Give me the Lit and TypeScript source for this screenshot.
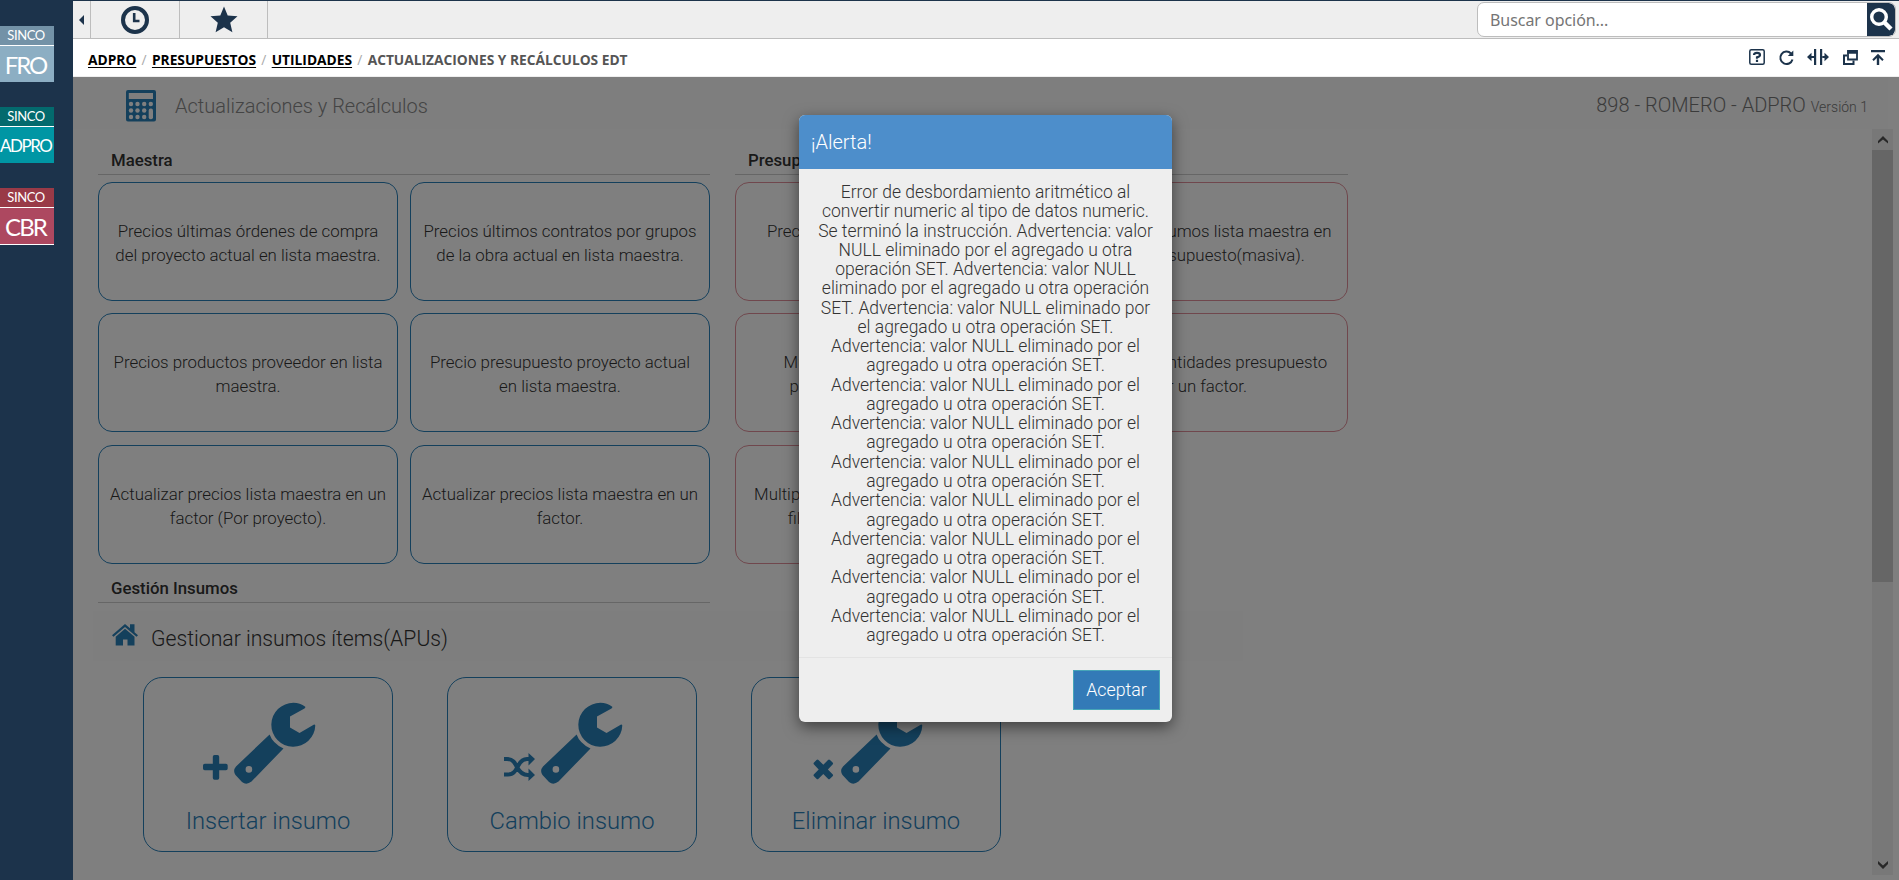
import { LitElement, html, css, svg } from "lit";
import { customElement, property } from "lit/decorators.js";

type Lines = string[];

const WARNING: Lines = ["Advertencia: valor NULL eliminado por el", "agregado u otra operación SET."];

const MESSAGE: Lines = [
  "Error de desbordamiento aritmético al",
  "convertir numeric al tipo de datos numeric.",
  "Se terminó la instrucción. Advertencia: valor",
  "NULL eliminado por el agregado u otra",
  "operación SET. Advertencia: valor NULL",
  "eliminado por el agregado u otra operación",
  "SET. Advertencia: valor NULL eliminado por",
  "el agregado u otra operación SET.",
  ...Array.from({ length: 8 }, () => WARNING).flat(),
];

const MASTER: Lines[] = [
  ["Precios últimas órdenes de compra", "del proyecto actual en lista maestra."],
  ["Precios últimos contratos por grupos", "de la obra actual en lista maestra."],
  ["Precios productos proveedor en lista", "maestra."],
  ["Precio presupuesto proyecto actual", "en lista maestra."],
  ["Actualizar precios lista maestra en un", "factor (Por proyecto)."],
  ["Actualizar precios lista maestra en un", "factor."],
];

const BUDGET: Lines[] = [
  ["Precios insumo lista maestra en", "presupuesto."],
  ["Precios de insumos lista maestra en", "para el presupuesto(masiva)."],
  ["Multiplicar precios insumos", "presupuesto por un factor"],
  ["Multiplicar cantidades presupuesto", "por un factor."],
  ["Multiplicar precios presupuestos en", "filtro por un factor general."],
];

const wrench = svg`
  <path fill-rule="evenodd" d="M35.600 32.400 Q38.500 41 49.500 46.500 L17.500 79.500 Q12.500 83.500 8 80 L1.500 73 Q-1.500 68.500 2 64.500 Z M18.200 67.400 a3.300 3.300 0 1 0 -6.600 0 a3.300 3.300 0 1 0 6.600 0 Z"/>
  <path d="M71.300 4.700 Q66 .8 59.500 .8 A22 22 0 1 0 81.300 23.500 Q80.800 21.800 78.800 23.200 L65.500 31 L56 25.500 V14.500 L70.500 6.500 Q71.800 5.500 71.300 4.700 Z"/>`;

const marks: Record<string, unknown> = {
  plus: svg`<path d="M11.500 0 h3 q1.700 0 1.700 1.700 V8.700 H23 q1.700 0 1.700 1.700 v3.200 q0 1.700 -1.700 1.700 H16.200 V23 q0 1.700 -1.700 1.700 h-3 q-1.700 0 -1.700 -1.700 V15.300 H1.700 Q0 15.300 0 13.600 v-3.200 Q0 8.700 1.700 8.700 H9.800 V1.700 Q9.800 0 11.500 0 Z"/>`,
  shuffle: svg`<path d="M0 6 H3 C9 6 11 10 13 14 S18 22 24 22 H26 M0 21.500 H4 C10 21.500 12 17 14 13 S18 6 23 6 H26" fill="none" stroke="currentColor" stroke-width="4"/><path d="M24.500 0 L31 6 L24.500 12.500 Z M24.500 15.500 L31 22 L24.500 28 Z"/>`,
  times: svg`<path d="M3.500 1 Q4.500 0 5.500 1 L10.300 5.800 L15 1 Q16 0 17 1 L19.600 3.600 Q20.600 4.600 19.600 5.600 L14.900 10.400 L19.600 15.200 Q20.600 16.200 19.600 17.200 L17 19.800 Q16 20.800 15 19.800 L10.300 15 L5.500 19.800 Q4.500 20.800 3.500 19.800 L1 17.200 Q0 16.200 1 15.200 L5.700 10.400 L1 5.600 Q0 4.600 1 3.600 Z"/>`,
};

@customElement("module-logo")
class ModuleLogo extends LitElement {
  @property() name = "";
  static styles = css`
    :host { display: block; width: 54px; height: 57px; color: #fff; font-family: Lato, sans-serif; }
    .brand { height: 19px; font-size: 13px; line-height: 18px; letter-spacing: -0.4px; text-align: center; padding-right: 2px; box-sizing: border-box; }
    .code { height: 36px; margin-top: 1px; line-height: 38px; text-align: center; font-size: 24px; white-space: nowrap; padding-right: 3px; box-sizing: border-box; }
    .frame { background: linear-gradient(#fff, #fff) 0 19px / 54px 1px no-repeat; }
    .fro .brand { background: #7392a7; } .fro .code { background: #8caec3; letter-spacing: -2px; }
    .adpro .brand { background: #036a6d; } .adpro .code { background: #0096a4; font-size: 17px; letter-spacing: -1.5px; line-height: 38px; }
    .cbr { border-bottom: 1px solid #fff; }
    .cbr .brand { background: #993a47; } .cbr .code { background: #ad4860; letter-spacing: -1.8px; }
  `;
  render() {
    return html`<div class="frame ${this.name.toLowerCase()}"><div class="brand">SINCO</div><div class="code">${this.name}</div></div>`;
  }
}

@customElement("option-card")
class OptionCard extends LitElement {
  @property({ attribute: false }) lines: Lines = [];
  static styles = css`
    :host { display: flex; flex-direction: column; align-items: center; justify-content: center; box-sizing: border-box; height: 119px; padding-top: 3px; border: 1px solid var(--edge); border-radius: 14px; font: 300 16.850px/24px Roboto, sans-serif; color: #333; white-space: nowrap; }
  `;
  render() {
    return this.lines.map((l) => html`<div>${l}</div>`);
  }
}

@customElement("tool-card")
class ToolCard extends LitElement {
  @property() mark = "plus";
  @property() label = "";
  static styles = css`
    :host { display: flex; flex-direction: column; align-items: center; box-sizing: border-box; width: 250px; height: 175px; border: 1px solid #2980b9; border-radius: 19px; color: #2980b9; font: 300 23.800px/32px Roboto, sans-serif; }
    .icons { display: flex; align-items: flex-end; height: 81px; margin-top: 25px; gap: 6px; padding-right: 17px; }
    .wrench { width: 82px; height: 82px; }
    .plus { width: 25px; height: 25px; margin: 0 0 4px 0; }
    .shuffle { width: 31px; height: 28px; margin-bottom: 3px; }
    .times { width: 21px; height: 21px; margin: 0 1px 4px 0; }
    svg { fill: currentColor; overflow: visible; display: block; }
    .label { margin-top: 21px; white-space: nowrap; }
  `;
  render() {
    return html`<div class="icons">
        <svg class=${this.mark}>${marks[this.mark]}</svg>
        <svg class="wrench" viewBox="0 0 82 82">${wrench}</svg>
      </div>
      <div class="label">${this.label}</div>`;
  }
}

@customElement("app-root")
class AppRoot extends LitElement {
  static styles = css`
    :host { display: flex; position: relative; width: 1899px; height: 880px; overflow: hidden; background: #fff; font-family: Roboto, sans-serif; }
    * { box-sizing: border-box; }
    svg { display: block; overflow: visible; }
    .side { width: 73px; flex: none; background: #1c334b; padding-top: 26px; display: flex; flex-direction: column; gap: 24px; }
    .main { flex: 1; min-width: 0; display: flex; flex-direction: column; color: #1c334b; }
    .top { height: 39px; flex: none; display: flex; background: #eee; border-top: 1px solid #1c334b; border-bottom: 1px solid #bdbdbd; }
    .cell { display: flex; align-items: center; justify-content: center; border-right: 1px solid #bdbdbd; }
    .c1 { width: 18px; } .c2 { width: 89px; } .c3 { width: 88px; }
    .search { margin: 1px 3px 1px auto; width: 419px; height: 35px; display: flex; border: 1px solid #bdbdbd; border-radius: 7px; background: #fff; overflow: hidden; }
    .query { flex: 1; padding-left: 12px; font: 16px/34px "Noto Sans", sans-serif; letter-spacing: -0.05px; color: #757575; }
    .go { width: 28px; background: #1c334b; border-radius: 0 6px 6px 0; padding: 5px 0 0 3px; }
    .crumbs { height: 38px; flex: none; display: flex; align-items: center; border-bottom: 1px solid #eee; padding: 4px 14px 0 15px; font: 700 13.750px/20px "Open Sans", sans-serif; white-space: nowrap; }
    .crumbs a { color: #000; text-decoration: underline; text-underline-offset: 2px; }
    .sep { color: #aaa; font-weight: 400; width: 15.600px; text-align: center; }
    .here { color: #555; }
    .actions { margin-left: auto; display: flex; align-items: center; gap: 13.500px; margin-top: -5px; }
    .view { position: relative; flex: 1; min-height: 0; display: flex; flex-direction: column; color: #333; }
    .title { height: 52px; flex: none; width: 1815px; display: flex; align-items: center; background: #fcfcfc; padding: 5px 20px 0 53px; font-weight: 300; font-size: 20px; color: #888; white-space: nowrap; }
    .title .name { margin-left: 19px; }
    .title .project { margin: -2px 0 0 auto; color: #777; }
    .title small { font-size: 14px; }
    .body { flex: 1; min-height: 0; display: flex; padding-right: 6px; }
    .sections { flex: 1; padding-left: 25px; }
    .pair { display: flex; gap: 25px; }
    .group { width: 612px; }
    .group.wide { width: 613px; }
    h3 { margin: 0; height: 46px; padding: 19px 0 0 13px; font: 500 16.800px/24px Roboto, sans-serif; color: #333; border-bottom: 1px solid #ccc; }
    .grid { margin-top: 7px; display: grid; grid-template-columns: 300px 300px; justify-content: space-between; row-gap: 12.250px; }
    .blue { --edge: #2980b9; } .pink { --edge: #e08f9a; }
    .insumos h3 { height: 39px; padding-top: 12px; }
    .insumos { width: 612px; }
    .banner { margin: 8px 0 0 -5px; width: 1150px; height: 50px; background: #fcfcfc; display: flex; align-items: center; padding: 5px 0 0 18px; font-weight: 300; font-size: 21.200px; }
    .banner svg { margin: -7px 13px 0 1px; }
    .tools { margin: 16px 0 0 45px; display: flex; gap: 54px; }
    .scroll { width: 21px; height: 746px; background: #f1f1f1; display: flex; flex-direction: column; justify-content: space-between; }
    .scroll .arrow { height: 21px; display: flex; align-items: center; justify-content: center; }
    .thumb { height: 432px; background: #cdcdcd; margin-bottom: auto; }
    .veil { position: absolute; inset: 0; background: rgba(0, 0, 0, 0.5); }
    .modal { position: absolute; left: 799px; top: 115px; width: 373px; height: 607px; display: flex; flex-direction: column; background: #eee; border-radius: 6px; overflow: hidden; box-shadow: 0 5px 15px rgba(0, 0, 0, 0.5); }
    .head { height: 54px; background: #4d8ecb; color: #fff; font: 300 20px/55px Roboto, sans-serif; padding-left: 12px; }
    .text { flex: 1; padding-top: 14px; text-align: center; white-space: nowrap; font: 300 17.500px/19.270px Roboto, sans-serif; color: #333; }
    .foot { height: 65px; border-top: 1px solid #e3e3e3; padding: 12px 12px 0 0; display: flex; justify-content: flex-end; }
    button { width: 87px; height: 40px; padding: 0; border: 1px solid #46a5b8; background: #337ab7; color: #fff; font: 300 17.800px/38px Roboto, sans-serif; }
  `;

  render() {
    return html`
      <nav class="side">
        <module-logo name="FRO"></module-logo>
        <module-logo name="ADPRO"></module-logo>
        <module-logo name="CBR"></module-logo>
      </nav>
      <div class="main">
        <header class="top">
          <div class="cell c1"><svg width="5" height="10"><path d="M5 0 V10 L0 5 Z" fill="#1c334b" /></svg></div>
          <div class="cell c2">
            <svg width="28" height="28" fill="none" stroke="#1c334b"><circle cx="14" cy="14" r="12" stroke-width="4" /><path d="M13.200 7 V15 H18.500" stroke-width="2.600" /></svg>
          </div>
          <div class="cell c3"><svg width="28" height="27" viewBox="0 0 28 27"><path d="M14 .5 L17.700 9.500 L27.500 10.300 L20.200 16.700 L22.400 26.200 L14 21.200 L5.600 26.200 L7.800 16.700 L.5 10.300 L10.300 9.500 Z" fill="#1c334b" /></svg></div>
          <div class="search">
            <div class="query">Buscar opción...</div>
            <div class="go"><svg width="22" height="23" fill="none" stroke="#fff"><circle cx="9" cy="9" r="7.300" stroke-width="3.400" /><path d="M14 14 L21 21" stroke-width="4.500" /></svg></div>
          </div>
        </header>
        <div class="crumbs">
          <a>ADPRO</a><span class="sep">/</span><a>PRESUPUESTOS</a><span class="sep">/</span><a>UTILIDADES</a><span class="sep">/</span><span class="here">ACTUALIZACIONES Y RECÁLCULOS EDT</span>
          <div class="actions">
            <svg width="16" height="16" fill="none" stroke="#1c334b"><rect x=".8" y=".8" width="14.400" height="14.400" rx="1.500" stroke-width="1.500" /><path d="M5 6 Q5 3.800 8 3.800 T11 6 Q11 7.400 8 8.400 V9.700 M8 10.800 V12.900" stroke-width="2.200" /></svg>
            <svg width="15" height="15" fill="none" stroke="#1c334b" stroke-width="2"><path d="M12 3.500 A6.200 6.200 0 1 0 13.500 9.500" /><path d="M14.300 .5 V6 H8.800 Z" fill="#1c334b" stroke="none" /></svg>
            <svg width="22" height="16" fill="#1c334b"><path d="M7 0 h2.200 V16 H7 Z M13 0 h2.200 V16 H13 Z M0 8 L4.500 3.800 V7 H8 V9 H4.500 V12.200 Z M22 8 L17.500 3.800 V7 H15 V9 H17.500 V12.200 Z" /></svg>
            <svg width="15" height="15" fill="none" stroke="#1c334b"><path d="M4 5.500 H1 V14 H10.500 V10.500" stroke-width="2" /><path d="M5 1 H14 V9.500 H5 Z" stroke-width="1.800" /><path d="M4.500 2 H14.500" stroke-width="3.500" /></svg>
            <svg width="14" height="15" fill="#1c334b"><path d="M0 0 H14 V2.300 H0 Z M7 3.800 L12.700 9.500 L11.300 10.900 L8.200 8 V15 H5.800 V8 L2.700 10.900 L1.300 9.500 Z" /></svg>
          </div>
        </div>
        <div class="view">
          <div class="title">
            <svg width="30" height="32" viewBox="0 0 30 32"><path fill="#2980b9" fill-rule="evenodd" d="M2 0 H28 Q30 0 30 2 V29.500 Q30 31.500 28 31.500 H2 Q0 31.500 0 29.500 V2 Q0 0 2 0 Z M2.800 3 V9 H27 V3 Z" />
              <g fill="#fff">${[14, 20.500, 27].map((y) => [5, 11.500, 18.200].map((x) => svg`<circle cx=${x} cy=${y} r="2.200"/>`))}<circle cx="24.800" cy="14" r="2.200" /><rect x="22.700" y="18.500" width="4.300" height="10.700" rx="2" /></g>
            </svg>
            <span class="name">Actualizaciones y Recálculos</span>
            <span class="project">898 - ROMERO - ADPRO <small>Versión 1</small></span>
          </div>
          <div class="body">
            <div class="sections">
              <div class="pair">
                <div class="group blue"><h3>Maestra</h3><div class="grid">${MASTER.map((l) => html`<option-card .lines=${l}></option-card>`)}</div></div>
                <div class="group wide pink"><h3>Presupuesto</h3><div class="grid">${BUDGET.map((l) => html`<option-card .lines=${l}></option-card>`)}</div></div>
              </div>
              <div class="insumos"><h3>Gestión Insumos</h3></div>
              <div class="banner">
                <svg width="26" height="22" viewBox="0 0 26 22" fill="#2980b9"><path d="M13 0 L18 4.300 V.3 H22.500 V8.200 L26 11.300 L24.500 12.800 L13 3 L1.500 12.800 L0 11.300 Z M13 4.800 L22.500 12.700 V21.500 H15.500 V15.500 H11 V21.500 H3.700 V12.700 Z" /></svg>
                Gestionar insumos ítems(APUs)
              </div>
              <div class="tools">
                <tool-card mark="plus" label="Insertar insumo"></tool-card>
                <tool-card mark="shuffle" label="Cambio insumo"></tool-card>
                <tool-card mark="times" label="Eliminar insumo"></tool-card>
              </div>
            </div>
            <div class="scroll">
              <div class="arrow"><svg width="10" height="8"><path d="M0 7.500 V5 L5 0 L10 5 V7.500 L5 3.500 Z" fill="#505050" /></svg></div>
              <div class="thumb"></div>
              <div class="arrow"><svg width="10" height="8"><path d="M0 0 V3 L5 8 L10 3 V0 L5 4.500 Z" fill="#505050" /></svg></div>
            </div>
          </div>
          <div class="veil"></div>
        </div>
      </div>
      <div class="modal" role="dialog">
        <div class="head">¡Alerta!</div>
        <div class="text">${MESSAGE.map((l) => html`<div>${l}</div>`)}</div>
        <div class="foot"><button>Aceptar</button></div>
      </div>
    `;
  }
}
